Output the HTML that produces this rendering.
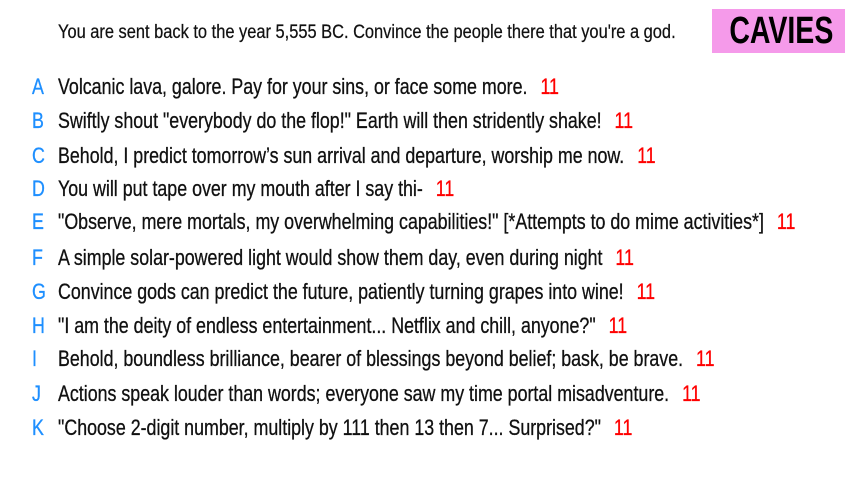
<!DOCTYPE html>
<html><head><meta charset="utf-8"><style>
body{margin:0;width:853px;height:480px;background:#fff;position:relative;overflow:hidden;font-family:"Liberation Sans",sans-serif;color:#111;}
.h{position:absolute;left:58px;top:22px;font-size:19px;white-space:nowrap;transform:scaleX(0.864);transform-origin:left center;-webkit-text-stroke:0.25px #111;}
.box{position:absolute;left:712px;top:9px;width:133px;height:44px;background:#f59aea;color:#000;font-size:38px;font-weight:bold;text-align:center;line-height:44px;}
.box span{display:inline-block;transform:scaleX(0.75);}
.r{position:absolute;left:0;white-space:nowrap;font-size:22px;line-height:24px;-webkit-text-stroke:0.3px currentColor;}
.r b{position:absolute;left:32px;color:#1e8fff;font-weight:normal;transform:scaleX(0.81);transform-origin:left center;}
.r .t{position:absolute;left:58px;transform:scaleX(0.81);transform-origin:left center;}
.r i{font-style:normal;color:#f00;margin-left:16px;}
</style></head><body>
<div class="h">You are sent back to the year 5,555 BC. Convince the people there that you're a god.</div>
<div class="box"><span>CAVIES</span></div>
<div class="r" style="top:75px"><b>A</b><span class="t">Volcanic lava, galore. Pay for your sins, or face some more.<i>11</i></span></div>
<div class="r" style="top:109px"><b>B</b><span class="t">Swiftly shout "everybody do the flop!" Earth will then stridently shake!<i>11</i></span></div>
<div class="r" style="top:144px"><b>C</b><span class="t">Behold, I predict tomorrow’s sun arrival and departure, worship me now.<i>11</i></span></div>
<div class="r" style="top:177px"><b>D</b><span class="t">You will put tape over my mouth after I say thi-<i>11</i></span></div>
<div class="r" style="top:210px"><b>E</b><span class="t">"Observe, mere mortals, my overwhelming capabilities!" [*Attempts to do mime activities*]<i>11</i></span></div>
<div class="r" style="top:246px"><b>F</b><span class="t">A simple solar-powered light would show them day, even during night<i>11</i></span></div>
<div class="r" style="top:280px"><b>G</b><span class="t">Convince gods can predict the future, patiently turning grapes into wine!<i>11</i></span></div>
<div class="r" style="top:314px"><b>H</b><span class="t">"I am the deity of endless entertainment... Netflix and chill, anyone?"<i>11</i></span></div>
<div class="r" style="top:347px"><b>I</b><span class="t">Behold, boundless brilliance, bearer of blessings beyond belief; bask, be brave.<i>11</i></span></div>
<div class="r" style="top:382px"><b>J</b><span class="t">Actions speak louder than words; everyone saw my time portal misadventure.<i>11</i></span></div>
<div class="r" style="top:416px"><b>K</b><span class="t">"Choose 2-digit number, multiply by 111 then 13 then 7... Surprised?"<i>11</i></span></div>
</body></html>
